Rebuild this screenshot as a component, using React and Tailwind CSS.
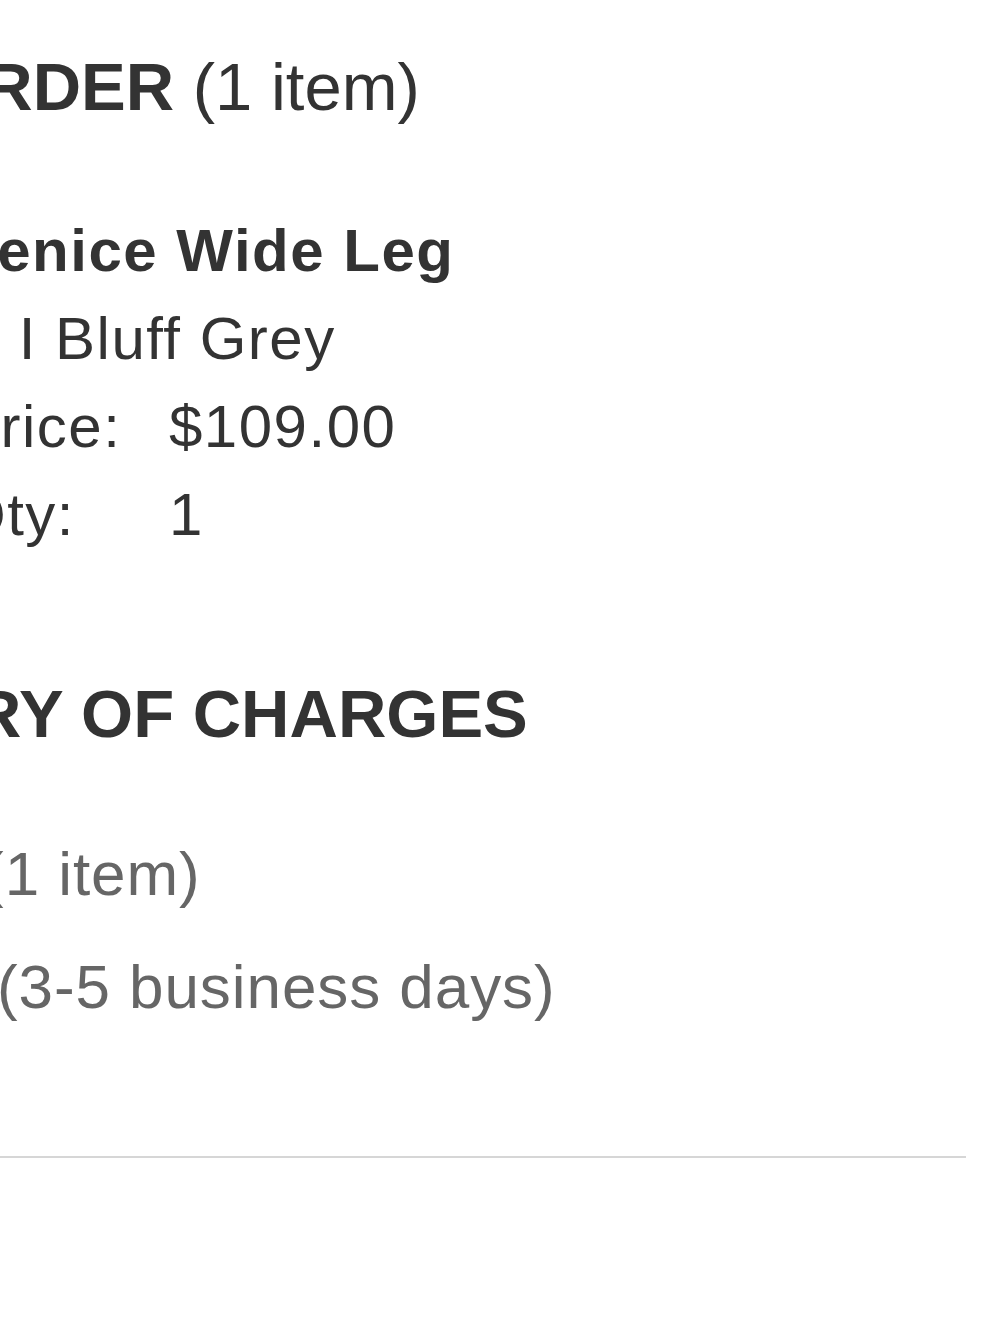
const sans = { fontFamily: '"Liberation Sans", Arial, Helvetica, sans-serif' };

function Heading({ children, note }) {
  return (
    <h2 className="text-[67px] leading-[80px] font-bold text-[#333333] whitespace-nowrap">
      {children}
      {note && <span className="font-normal"> {note}</span>}
    </h2>
  );
}

function DetailRow({ label, value }) {
  return (
    <div className="flex whitespace-nowrap">
      <span className="w-[210px] shrink-0">{label}</span>
      <span>{value}</span>
    </div>
  );
}

function ChargeRow({ label }) {
  return (
    <div className="text-[62px] leading-[113px] tracking-[0.015em] text-[#666666] whitespace-nowrap">
      {label}
    </div>
  );
}

export default function App() {
  return (
    <div className="min-h-screen bg-white overflow-hidden" style={sans}>
      <div className="ml-[-280px] w-[1246px] pt-[47px]">
        <Heading note="(1 item)">YOUR ORDER</Heading>

        <div className="mt-[80px] pl-[239px] text-[60px] leading-[88px] tracking-[0.025em] text-[#333333]">
          <div className="font-bold whitespace-nowrap">Venice Wide Leg</div>
          <div className="whitespace-nowrap">S I Bluff Grey</div>
          <DetailRow label="Price:" value="$109.00" />
          <DetailRow label="Qty:" value="1" />
        </div>

        <div className="mt-[115px]">
          <Heading>SUMMARY OF CHARGES</Heading>
        </div>

        <div className="mt-[63px] pl-[10px]">
          <ChargeRow label="Subtotal (1 item)" />
          <ChargeRow label="Shipping (3-5 business days)" />
        </div>

        <div className="mt-[113px] border-t-2 border-[#d6d6d6]" />
      </div>
    </div>
  );
}
